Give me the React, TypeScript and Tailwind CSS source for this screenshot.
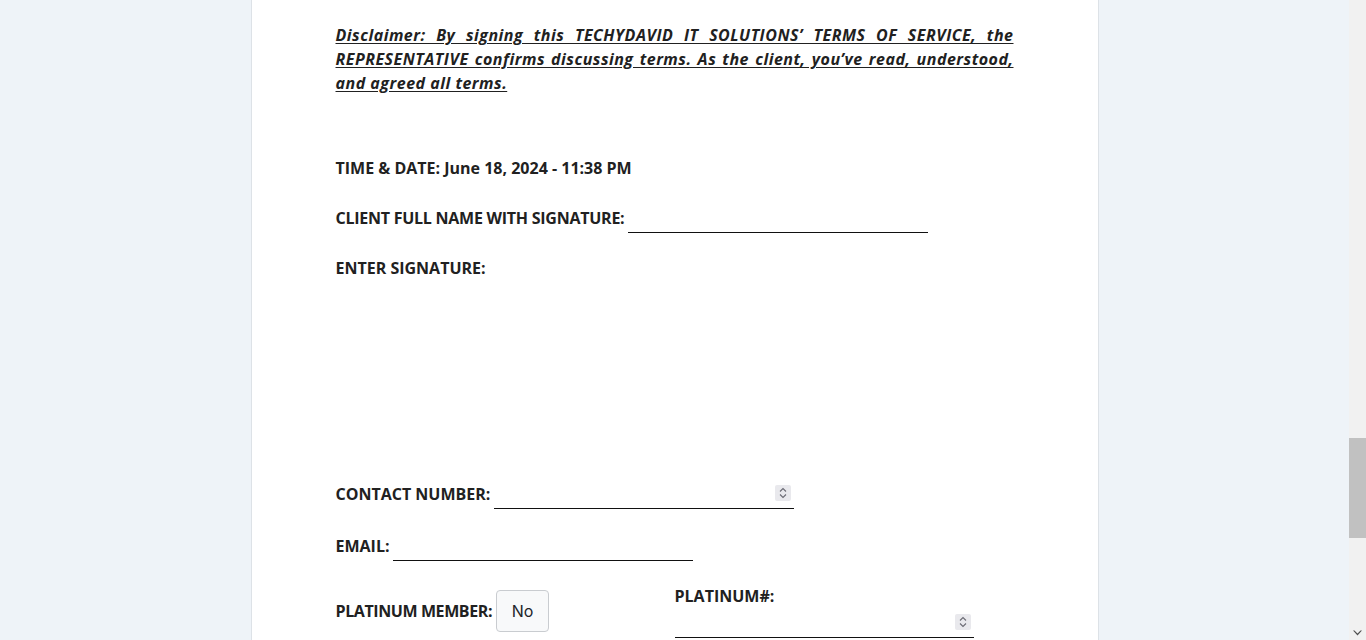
import React from "react";

function Spinner() {
    return (
        <span className="absolute right-[3px] bottom-[7px] flex h-[16px] w-[16px] flex-col items-center justify-center rounded-[2px] bg-[#e9e9ed]">
            <svg width="8" height="12" viewBox="0 0 8 12" fill="none" stroke="#6b6b74" strokeWidth="1.1">
                <path d="M1 4.5 L4 1.5 L7 4.5" />
                <path d="M1 7.5 L4 10.5 L7 7.5" />
            </svg>
        </span>
    );
}

function Line({ spin = false, w = "w-[300px]" }: { spin?: boolean; w?: string }) {
    return (
        <span className={"relative block h-[30px] border-b-[1.5px] border-[#111] " + w}>
            {spin && <Spinner />}
        </span>
    );
}

export default function App() {
    return (
        <div className="flex h-screen w-full overflow-hidden bg-[#eef3f8] font-['Open_Sans',sans-serif] text-[#212121]">
            <div className="flex flex-1 justify-center">
                <div className="w-[848px] border-x border-[#dde2e7] bg-white px-[84px] pt-[23px]">
                    <p className="text-justify text-[16px] font-bold italic leading-6 tracking-[0.5px] underline underline-offset-2">
                        Disclaimer: By signing this TECHYDAVID IT SOLUTIONS’ TERMS OF SERVICE, the REPRESENTATIVE confirms
                        discussing terms. As the client, you’ve read, understood, and agreed all terms.
                    </p>

                    <div className="mt-[61px] text-[16px] font-bold leading-6">TIME &amp; DATE: June 18, 2024 - 11:38 PM</div>

                    <div className="mt-[23px] flex items-end gap-[4px]">
                        <span className="mb-[3px] text-[16px] font-bold leading-6 tracking-[-0.25px]">CLIENT FULL NAME WITH SIGNATURE:</span>
                        <Line />
                    </div>

                    <div className="mt-[23px] text-[16px] font-bold leading-6">ENTER SIGNATURE:</div>

                    {/* signature pad, blank */}
                    <div className="h-[199px]"></div>

                    <div className="flex items-end gap-[4px]">
                        <span className="mb-[3px] text-[16px] font-bold leading-6">CONTACT NUMBER:</span>
                        <Line spin />
                    </div>

                    <div className="mt-[22px] flex items-end gap-[4px]">
                        <span className="mb-[3px] text-[16px] font-bold leading-6">EMAIL:</span>
                        <Line />
                    </div>

                    <div className="mt-[23px] grid grid-cols-2">
                        <div className="mt-[6px] flex items-center gap-[4px] self-start">
                            <span className="text-[16px] font-bold leading-6 tracking-[-0.4px]">PLATINUM MEMBER:</span>
                            <span className="flex h-[42px] w-[53px] items-center justify-center rounded-[4px] border border-[#c9ccd0] bg-[#f8f9fa] font-['Inter',sans-serif] text-[16px] text-[#212529]">
                                No
                            </span>
                        </div>
                        <div className="flex flex-col">
                            <span className="text-[16px] font-bold leading-6">PLATINUM#:</span>
                            <Line spin w="w-[299px]" />
                        </div>
                    </div>
                </div>
            </div>

            {/* scrollbar */}
            <div className="relative h-full w-[17px] bg-[#f1f1f1]">
                <div className="absolute left-0 top-[438px] h-[100px] w-full bg-[#c1c1c1]"></div>
                <svg className="absolute bottom-[4px] left-[4px]" width="9" height="6" viewBox="0 0 9 6" fill="#505050">
                    <path d="M0 0.5 L4.5 5.5 L9 0.5 L7.5 0.5 L4.5 3.5 L1.5 0.5 Z" />
                </svg>
            </div>
        </div>
    );
}
